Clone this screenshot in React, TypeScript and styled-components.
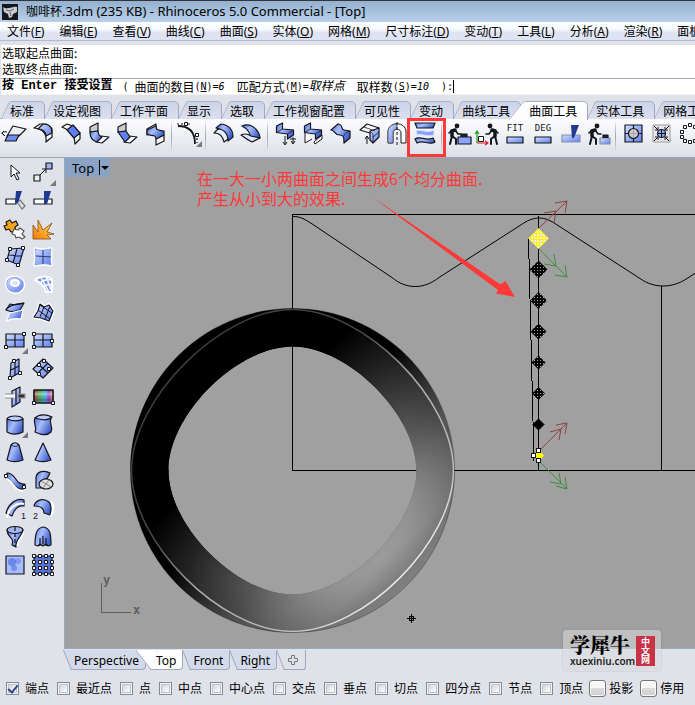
import React from "react";
import styled, { createGlobalStyle, css } from "styled-components";

const ui = `"Noto Sans", "Noto Sans CJK SC", sans-serif`;
const cjk = `"Noto Sans CJK SC", sans-serif`;
const RED = "#ff3838";

const Global = createGlobalStyle`
  * { box-sizing: border-box; }
  html, body, #root { height: 100%; }
  body { margin: 0; background: #e0e2ea; overflow: hidden; }
  button, input { font: inherit; color: inherit; margin: 0; padding: 0; border: 0; background: none; }
  svg { display: block; }
`;

const Window = styled.div`
  position: relative;
  display: flex;
  flex-direction: column;
  height: 100vh;
  background: #e0e2ea;
  color: #000;
  font: 12px/16px ${cjk};
  white-space: nowrap;
  overflow: hidden;
`;

const TitleBar = styled.header`
  display: flex;
  align-items: center;
  gap: 8px;
  flex: none;
  height: 22px;
  padding-left: 2px;
  border-top: 1px solid #33343c;
  background: linear-gradient(#94b1d0, #b9d0e9);
  font: 13px/20px ${ui};
`;
const Title = styled.h1`
  margin: 0;
  font: inherit;
`;
const FileName = styled.span`
  font-size: 12px;
`;

const MenuBar = styled.nav`
  display: flex;
  gap: 15px;
  flex: none;
  height: 19px;
  padding-left: 7px;
  overflow: hidden;
  border-bottom: 1px solid #b3bbd3;
  background: linear-gradient(#fbfcff 0 35%, #dfe4f3 60%, #dde3f2);
  font: 12px/19px ${ui};
`;
const MenuItem = styled.button`
  flex: none;
`;

const CommandArea = styled.section`
  flex: none;
  margin: 4px 0 6px 1px;
  background: #fff;
  border-bottom: 1px solid #f4f5f9;
`;
const History = styled.div`
  height: 34px;
  padding-left: 1px;
  border-bottom: 1px solid #a4a9bb;
`;
const Prompt = styled.div`
  display: flex;
  align-items: center;
  height: 15px;
  padding-left: 1px;
  line-height: 15px;
`;
const Mono = styled.span`
  font: 10px/15px "DejaVu Sans Mono", monospace;
`;
const Strong = styled.strong`
  margin-right: 10px;
  font: bold 12px/15px "Liberation Mono", ${cjk};
`;
const Option = styled.button`
  display: flex;
  align-items: center;
  margin-right: 12px;
  i { font-family: "DejaVu Sans Mono", ${cjk}; }
`;
const CommandInput = styled.input`
  flex: 1;
  min-width: 0;
  height: 13px;
  border-left: 1px solid #000;
  outline: none;
`;

const TabStrip = styled.div`
  display: flex;
  flex: none;
  height: 18px;
  padding-left: 1px;
  border-bottom: 1px solid #a9b0c6;
`;
const ToolTab = styled.button<{ $active?: boolean }>`
  position: relative;
  z-index: ${(p) => (p.$active ? 2 : 0)};
  flex: none;
  height: 18px;
  padding: 0 10px 0 9px;
  line-height: 17px;
  isolation: isolate;
  &::before, &::after {
    content: "";
    position: absolute;
    z-index: -1;
    top: 0;
    bottom: ${(p) => (p.$active ? "-1px" : "0")};
    background: ${(p) => (p.$active ? "#fdfdff" : "linear-gradient(#ccd4e8, #dbe0ee)")};
    border-top: 1px solid #a9b0c6;
  }
  &::before {
    left: ${(p) => (p.$active ? "-4px" : "4px")};
    width: 30px;
    border-left: 1px solid #a0a8c0;
    border-top-left-radius: 3px;
    transform: skewX(${(p) => (p.$active ? "-38deg" : "-25deg")});
  }
  &::after {
    left: 14px;
    right: -1px;
    border-right: 1px solid #a0a8c0;
    border-top-right-radius: 5px;
  }
`;
const ToolBar = styled.div`
  display: flex;
  flex: none;
  align-items: center;
  height: 39px;
  padding: 0 0 8px 1px;
  border-bottom: 1px solid #9aa8bd;
  background: linear-gradient(#fdfdff, #dcdfe7);
`;
const ToolButton = styled.button<{ $marked?: boolean }>`
  position: relative;
  display: grid;
  place-items: center;
  flex: none;
  width: 28px;
  height: 28px;
  ${(p) =>
    p.$marked &&
    css`
      &::after {
        content: "";
        position: absolute;
        z-index: 3;
        inset: -2px -7px -9px -4px;
        border: 3px solid ${RED};
      }
    `}
`;
const Divider = styled.span`
  flex: none;
  width: 1px;
  height: 28px;
  margin: 4px 3px 0 2px;
  background: linear-gradient(#e4e6ec, #a4a6ae 50%, #d4d6de);
`;

const Work = styled.main`
  display: flex;
  flex: 1;
  min-height: 0;
`;
const SideBar = styled.aside`
  display: grid;
  grid-template-columns: 28px 28px;
  grid-auto-rows: 28px;
  flex: none;
  align-content: start;
  width: 64px;
  padding: 1px 0 0 1px;
`;
const ViewColumn = styled.div`
  display: flex;
  flex: 1;
  flex-direction: column;
  min-width: 0;
`;
const Viewport = styled.section`
  position: relative;
  flex: 1;
  min-height: 0;
  overflow: hidden;
  border: solid #9aa8bd;
  border-width: 0 0 1px 1px;
  background: #a0a0a0;
`;
const Scene = styled.svg`
  position: absolute;
  inset: 0;
  width: 100%;
  height: 100%;
`;
const ViewName = styled.button`
  position: absolute;
  top: 0;
  left: 0;
  display: flex;
  align-items: center;
  gap: 5px;
  height: 19px;
  padding: 0 1px 0 7px;
  background: #8aa3c4;
  font: 13px/18px ${ui};
`;
const Drop = styled.span`
  display: grid;
  place-items: center;
  width: 10px;
  height: 15px;
  border-left: 1px solid #000;
`;
const Note = styled.p`
  position: absolute;
  top: 10px;
  left: 132px;
  margin: 0;
  color: ${RED};
  font: 16px/20px ${cjk};
`;

const ViewTabs = styled.div`
  display: flex;
  flex: none;
  height: 22px;
  padding-top: 1px;
`;
const ViewTab = styled.button<{ $active?: boolean }>`
  position: relative;
  z-index: ${(p) => (p.$active ? 2 : 0)};
  display: grid;
  place-items: center;
  flex: none;
  height: 20px;
  padding: 0 7px 0 10px;
  font: 12px/19px ${ui};
  isolation: isolate;
  &::before, &::after {
    content: "";
    position: absolute;
    z-index: -1;
    top: 0;
    bottom: 0;
    background: ${(p) => (p.$active ? "#fff" : "#d3daea")};
    border-bottom: 1px solid #a0a8c0;
  }
  &::before {
    left: ${(p) => (p.$active ? "-3px" : "3px")};
    width: 20px;
    border-left: 1px solid #a0a8c0;
    transform: skewX(${(p) => (p.$active ? "38deg" : "22deg")});
  }
  &::after {
    left: 12px;
    right: 0;
    border-right: 1px solid #a0a8c0;
    border-bottom-right-radius: 4px;
  }
`;
const AddTab = styled(ViewTab)`
  padding: 0 8px 0 11px;
  &::before, &::after { background: #e0e2ea; }
`;

const SnapBar = styled.footer`
  display: flex;
  flex: none;
  gap: 8px;
  align-items: center;
  height: 34px;
  padding-left: 6px;
`;
const Snap = styled.label`
  display: flex;
  flex: none;
  align-items: center;
  gap: 6px;
`;
const Check = styled.input`
  appearance: none;
  flex: none;
  width: 13px;
  height: 13px;
  border: 1px solid #858b94;
  background: linear-gradient(135deg, #c6cad0, #f6f7f8 70%);
  box-shadow: inset 0 0 0 1px #f3f4f6, inset 0 0 0 2px #c0c4ca;
  display: grid;
  place-items: center;
  &:checked::after {
    content: "";
    width: 4px;
    height: 8px;
    margin-bottom: 3px;
    border: solid #33468c;
    border-width: 0 2px 2px 0;
    transform: rotate(40deg);
  }
`;
const PushSnap = styled(Snap)`
  gap: 3px;
  margin-left: -2px;
  & + & { margin-left: -1px; }
`;
const Push = styled.input`
  appearance: none;
  width: 17px;
  height: 17px;
  border: 1px solid #777;
  border-radius: 3px;
  background: linear-gradient(#f7f7f7 45%, #dadada 50%, #d0d0d0);
  box-shadow: inset 0 0 0 1px #fafafa;
`;

const Watermark = styled.aside`
  position: absolute;
  right: 34px;
  bottom: 34px;
  z-index: 4;
  display: flex;
  align-items: center;
  gap: 3px;
  padding: 4px 6px 4px 7px;
  border-radius: 4px;
  background: rgba(218, 219, 221, 0.55);
  box-shadow: 0 0 2px rgba(120, 120, 120, 0.4);
`;
const Brand = styled.div`
  width: 63px;
  font: 600 10px/11px "Noto Sans", sans-serif;
  color: #222;
`;
const BrandName = styled.div`
  color: #000;
  font: 900 20px/22px "Noto Serif CJK SC", "Noto Sans CJK SC", serif;
`;
const Seal = styled.div`
  display: grid;
  place-items: center;
  width: 19px;
  height: 30px;
  background: #c83345;
  color: #fff;
  font: bold 9px/9px ${cjk};
  white-space: pre-line;
`;

const K = "#15161c";
const B = "url(#blue)";
const D = "url(#deep)";

const Glyph = ({ children, more }: { children: React.ReactNode; more?: boolean }) => (
  <svg width="28" height="28" viewBox="-2 -2 28 28" fill="none" stroke={K} strokeWidth="1.2" strokeLinejoin="round" aria-hidden>
    {children}
    {more && <path d="M25 19v6h-6z" fill="#777" stroke="none" />}
  </svg>
);

const Sq = ({ at, s = 3 }: { at: number[][]; s?: number }) => (
  <>
    {at.map(([x, y]) => (
      <rect key={`${x}-${y}`} x={x - s / 2} y={y - s / 2} width={s} height={s} fill="#fff" stroke={K} strokeWidth="1" />
    ))}
  </>
);

const Man = () => (
  <g stroke={K} strokeLinecap="round">
    <circle cx="10" cy="4" r="2.4" fill={K} stroke="none" />
    <path d="M8 8L5 9v5" strokeWidth="3.500" />
    <path d="M5 14l-2 8M5 14l4 3v5" strokeWidth="2" />
    <path d="M8 8l3 4h3M5 8L2 11" strokeWidth="1.6" />
  </g>
);
const Chair = () => (
  <>
    <path d="M3.500 4l6-3v6l11 1v5l-6 4v-5l-11-1.500z" fill={D} />
    <path d="M9.500 7l-6 3.500M14.500 12l6-4" strokeWidth=".8" />
  </>
);

type Tool = { name: string; art: React.ReactNode; more?: boolean; marked?: boolean } | null;

const tools: Tool[] = [
  { name: "延伸曲面", art: <><path d="M10 4l13 3-7 7H4z" fill="#eee" /><path d="M5 13h11l-3 6H2z" fill="#6f8df0" /><path d="M4 10c-6-1-6 2-3 3M1 9l-2 2 3 3" strokeWidth="1" /></> },
  { name: "曲面圆角", art: <><path d="M3 6l6-4h6c5 2 7 5 6 9v4l-6 5c1-8-3-13-12-14z" fill="#fbfbfb" /><path d="M7 7l5-5c6 0 9 4 9 9l-6 3c0-4-3-7-8-7z" fill={B} /></> },
  { name: "曲面斜角", art: <><path d="M3 5l5-3 6 2-5 4zM15 15l6-4v6l-5 5z" fill="#f4f4f4" /><path d="M8 8l6-5 7 8-6 5z" fill="#5f7ff0" /></> },
  { name: "不等距圆角", art: <><path d="M3 10V5l8-4v8z" fill="#ccc" /><path d="M14 14l8 1-7 6-6-1z" fill="#fff" /><path d="M3 10l8-1c0 3 1 5 4 6l-5 5c-4-1-7-4-7-10z" fill={D} /></> },
  { name: "不等距斜角", art: <><path d="M3 10V5l8-4v8z" fill="#ccc" /><path d="M14 14l8 1-7 6-6-1z" fill="#fff" /><path d="M3 10l8-1 4 6-5 5z" fill="#5f7ff0" /></> },
  { name: "混接曲面", art: <><path d="M4 7l9-5v5l-9 6zM13 17l8-4v6l-8 4z" fill="#fff" /><path d="M4 8l9-4c0 5 3 4 8 5v4l-8 4c0-6-6-2-9-5z" fill={D} /></> },
  null,
  { name: "曲线工具", more: true, art: <><path d="M1 4c11 0 17 6 17 18" strokeWidth="1.8" /><path d="M0 2h7m4 0h4M20 16v5" strokeDasharray="2 2" /><Sq at={[[9, 2], [20, 13]]} /></> },
  null,
  { name: "偏移曲面", art: <><path d="M5 6l5-4c7 1 12 5 12 13l-5 4C17 12 12 7 5 6z" fill={D} /><path d="M3 11l4-4c6 0 9 4 10 10l-4 3c-1-5-4-9-10-9z" fill="#e8edff" /></> },
  { name: "偏移不等距", art: <><path d="M3 4c8-4 17 3 18 12l-9 2C12 11 9 7 3 4z" fill={D} /><path d="M2 13c4-2 7-1 10 1l9 2-8 4c-4-2-7-4-11-7z" fill="#dfe7ff" /></> },
  null,
  { name: "连接曲面", art: <><Chair /><path d="M12 14v8m-2-2l2 3 2-3M20 15v6m-2-2l2 3 2-3M17 17h6" strokeWidth="1" /></> },
  { name: "对称曲面", art: <><path d="M4 10v11l7-4M13 20l8-7v4l-7 5z" fill="#fff" strokeWidth="1" /><Chair /></> },
  { name: "衔接曲面", art: <><path d="M2 8l7-6c5 0 3 6 6 6l6 1v7l-6 5c0-5 0-8-4-8-6 0-4-4-9-5z" fill={D} /><path d="M15 14c0-3 3-4 6-5" strokeWidth=".8" /></> },
  { name: "合并曲面", art: <><path d="M3 8l7-6 12 4-6 6z" fill="#fff" /><path d="M13 9l9-3v9l-6 6-3-3z" fill={B} /><path d="M13 9l3 3v9M7 5l11 4M16 15l6-5" strokeWidth=".8" /><path d="M10 22v-8m-2 3l2-3 2 3" strokeWidth="1" /></> },
  { name: "重建曲面", art: <><path d="M3 21V10c0-11 18-11 18 0v11h-5V11c0-5-8-5-8 0v10z" fill="#fff" strokeWidth="1" /><path d="M3 21V10C3 5 7 2 12 2v5c-3 0-4 2-4 4v10z" fill={B} stroke="#555" strokeWidth=".8" /><path d="M12 0v24" strokeDasharray="3 2" strokeWidth="1" /></> },
  { name: "均分曲面", marked: true, art: <><path d="M2 1h20l-2 5H4z" fill={D} /><path d="M3 9c5-3 10 3 18-1v5c-6 3-12-2-17 0z" fill="#86a2ff" stroke="#dce5ff" /><path d="M2 17c5-4 11 3 18-1l2 4c-6 4-12-3-18 1z" fill={D} /></> },
  null,
  { name: "调整曲面", art: <><Man /><rect x="11" y="15" width="13" height="7" fill="#8aa5ff" /><path d="M14 15v-3h6v3" fill="#222" /></> },
  { name: "移动曲面", art: <><g transform="translate(25 0) scale(-1 1)"><Man /></g><path d="M2 21V9m-2 3l2-3 2 3" stroke="#1a9a22" /><path d="M2 21h11m-3-2l3 2-3 2" stroke="#e31919" /><Sq at={[[6, 17]]} s={5} /></> },
  { name: "FIT", art: <><text x="12" y="9" textAnchor="middle" fontFamily="DejaVu Sans Mono, monospace" fontSize="9" fill={K} stroke="none">FIT</text><rect x="4" y="15" width="16" height="6" fill={B} /></> },
  { name: "DEG", art: <><text x="12" y="9" textAnchor="middle" fontFamily="DejaVu Sans Mono, monospace" fontSize="9" fill={K} stroke="none">DEG</text><rect x="4" y="15" width="16" height="6" fill={B} /></> },
  { name: "分割曲面", art: <><path d="M3 13h18v7H3z" fill={B} stroke="#8a8fa5" /><path d="M12 3h8l-5 13h-2z" fill="#233b8c" stroke="none" /></> },
  { name: "取消修剪", art: <><Man /><rect x="13" y="16" width="10" height="6" fill={B} stroke="#8a8fa5" /><path d="M16 16v-3h5v3" fill="#222" /></> },
  null,
  { name: "缩回曲面", art: <><rect x="4" y="3" width="17" height="17" fill={B} /><path d="M12.500 3v17M4 11.500h17" /><circle cx="12.500" cy="11.500" r="5" fill="#ccc" /><path d="M12.500 7v9M8 11.500h9" stroke="#999" strokeWidth=".8" /></> },
  { name: "收缩曲面", art: <><rect x="4" y="3" width="17" height="17" stroke="#999" fill="#e8e8ec" strokeWidth="1" /><path d="M5 4l4 4m0-3v3H6M20 4l-4 4m0-3v3h3M5 19l4-4m0 3v-3H6M20 19l-4-4m0 3v-3h3" strokeWidth="1" /><circle cx="12.500" cy="11.500" r="4" fill="#8ea7ff" /><path d="M12.500 8v7M9 11.500h7" strokeWidth="1" /></> },
  { name: "控制点", art: <Sq at={[[13, 3], [18, 5], [8, 5], [5, 10], [5, 15], [8, 19], [13, 20], [18, 19], [21, 11]]} /> },
];

const Net = () => <path d="M3 5h18v13H3z M12 5v13M3 11h18" fill={B} />;
const Halo = ({ d, children }: { d: string; children?: React.ReactNode }) => (
  <><path d={d} stroke="#fff" strokeWidth="3.500" /><path d={d} fill={B} stroke="#6f86cf" strokeWidth="0.600" />{children}</>
);

const sideTools: NonNullable<Tool>[] = [
  { name: "选取", art: <path d="M8 4v12l3-3 3 6 2-1-3-6h4z" fill="#fff" strokeWidth="1" /> },
  { name: "点", more: true, art: <><path d="M8 15l7-7m-4 0h4v4" strokeWidth="1" /><rect x="3" y="14" width="6" height="6" fill="#eee" /><rect x="15" y="2" width="6" height="6" fill="#9eb2f7" /></> },
  { name: "修剪", art: <><path d="M3 10h10v5H3z" fill="#fff" /><path d="M14 13l3-2 5 6-3 3z" fill="#ddd" stroke="#777" /><path d="M13 2h6l-4 12h-3z" fill="#203990" stroke="none" /></> },
  { name: "分割", art: <><path d="M3 10h18v5H3z" fill="#fff" /><path d="M13 2h7l-4 13h-3z" fill="#203990" stroke="none" /></> },
  { name: "组合", art: <><path d="M3 5l4-2 2 3 4-2 2 4-3 2 1 4-5 1-2-3-3 1-2-4 3-1z" fill="#f6a51c" /><path d="M11 12l4 1 2-2 4 3-2 3 3 3-3 2-3-2-3 1-1-3-3-1z" fill="#fff" stroke="#555" /></> },
  { name: "炸开", art: <path d="M2 22V8l5 7 0-12 5 10 9-7-5 9 7 2-7 1 4 4z" fill="url(#fire)" stroke="#8a4a10" strokeWidth=".8" /> },
  { name: "三点曲面", art: <><path d="M7 4l14-1-5 17-12-5z M14 4l-4 14M6 10l13 1" fill={B} /><Sq at={[[7, 4], [20, 3], [4, 15], [15, 20]]} /></> },
  { name: "边缘曲面", art: <Halo d="M4 4c6 2 10 1 16 0-1 6-1 10 0 16-6-2-10-1-16 0 1-6 1-10 0-16z"><path d="M12 5v14M5 11l15 1" strokeWidth="1" stroke="#28357a" /></Halo> },
  { name: "平面曲线", art: <Halo d="M4 8c3-5 13-5 16 1 2 7-4 11-9 10C5 18 3 14 4 8z"><ellipse cx="12" cy="10" rx="4" ry="3" fill="#dfe3f7" stroke="#fff" strokeWidth="2" /></Halo> },
  { name: "网线", art: <><path d="M4 7c6-5 13-4 17-1v13h-6C14 13 10 10 4 7z" fill="#7c97ee" stroke="#fff" strokeWidth="2" /><path d="M9 10c3-3 7-4 12-3M12 14c2-2 5-3 9-2M9 3l9 16M15 3l5 14" stroke="#fff" strokeWidth="1.500" /></> },
  { name: "放样", art: <><path d="M3 9l4-6c4 1 9 1 14-1l-4 7c-4 2-9 2-14 0z" fill={D} /><path d="M3 20l4-8c4-1 8-2 13-3l-2 9c-5-1-10 0-15 2z" fill={D} stroke="#fff" /><path d="M3 9c1-3 8-6 18-7" /></> },
  { name: "嵌面", art: <><path d="M9 3l4 3 5-2 4 6-4 10-8-3-7-1 4-6z" stroke="#fff" strokeWidth="4" /><path d="M9 3l4 3 5-2 4 6-4 10-8-3-7-1 4-6z" fill={B} /><path d="M7 9l12 9M9 4l12 8M13 6L9 16M19 5l-5 13" strokeWidth="1" /></> },
  { name: "平面", more: true, art: <><Net /><Sq at={[[3, 18], [21, 5]]} /></> },
  { name: "平面三点", art: <><Net /><Sq at={[[3, 5], [3, 18], [21, 12]]} /></> },
  { name: "垂直平面", art: <><path d="M8 6l8-4v14l-9 5z M12 4v15M8 13l8-4" fill={B} /><Sq at={[[11, 4], [7, 21], [17, 16]]} /></> },
  { name: "逼近平面", art: <><path d="M12 2l10 9-10 10-10-9z M7 7l10 9M17 6L7 16" fill={B} /><Sq at={[[8, 8], [13, 4], [18, 12], [8, 17]]} /></> },
  { name: "切割平面", art: <><path d="M9 6l8-4v15l-8 5z M13 4v16" fill={B} /><path d="M2 11h10" stroke="#fff" strokeWidth="4" /><path d="M2 9h9M2 13h9" stroke="#888" strokeWidth="1" /><path d="M15 9h7v4h-7z" stroke="#999" fill="#333" /></> },
  { name: "帧平面", art: <><rect x="3" y="5" width="19" height="13" fill="url(#rainbow)" /><path d="M3 9h19" stroke="#fff" strokeOpacity=".35" strokeWidth="3" /><path d="M3 15h19" stroke="#402080" strokeOpacity=".35" strokeWidth="3" /><rect x="3" y="5" width="19" height="13" /><Sq at={[[3, 18], [22, 18]]} /></> },
  { name: "挤出", more: true, art: <><path d="M4 6v13c5 3 10 3 16 0V6z" fill={D} /><path d="M4 6c2-4 14-4 16 0-5 3-11 2-16 0z" fill="#bdccff" /></> },
  { name: "挤出沿曲线", art: <><path d="M4 5c-3 6 3 8 0 14 6 3 12 4 16 0 3-6-3-8 0-14z" fill={D} /><path d="M4 5c4-4 11-4 17-1-4 4-11 3-17 1z" fill="#bdccff" /></> },
  { name: "挤出锥形", art: <><path d="M8 4c3-3 5-3 8 0l4 15c-5 2-11 2-16 0z" fill={D} /><path d="M8 4c3 2 5 2 8 0" strokeWidth=".8" /></> },
  { name: "挤出至点", art: <path d="M12 2l8 17c-5 2-11 2-16 0z" fill={D} /> },
  { name: "单轨扫掠", art: <><path d="M4 4c10 0 7 12 18 11l-2 5C10 21 11 10 3 9z" fill={D} /><path d="M3 10c7 0 7 12 17 12" stroke="#fff" strokeWidth="2" /><Sq at={[[3, 7], [21, 18]]} /></> },
  { name: "旋转", art: <><path d="M5 19V8c1-6 9-7 14-4l-3 6c-4-1-6 1-6 9z" fill={D} /><ellipse cx="15" cy="15" rx="7" ry="5" fill="#ddd" /><path d="M10 12l10 6M12 19l6-8" stroke="#888" strokeWidth="1" /></> },
  { name: "单轨", art: <><path d="M3 16C6 5 15 1 21 3v6c-7-1-10 4-12 10z" fill={D} /><path d="M4 21C5 11 14 5 21 7" stroke="#fff" strokeWidth="2" /><text x="18" y="22" fontFamily="Liberation Sans" fontSize="9" fill={K} stroke="none">1</text></> },
  { name: "双轨", art: <><path d="M3 9c2-7 10-8 15-4 3 3 2 9 1 13l-6-2c0-5-4-7-10-7z" fill={D} /><path d="M20 4c4 5 2 11 0 15" stroke="#fff" strokeWidth="2" /><text x="2" y="22" fontFamily="Liberation Sans" fontSize="9" fill={K} stroke="none">2</text></> },
  { name: "旋转成形", art: <><path d="M20 6c0 6-6 8-6 15" stroke="#fff" strokeWidth="3" /><path d="M4 5c0 8 8 7 5 15l4 2c-1-8 6-10 7-17z" fill={D} /><ellipse cx="12" cy="5" rx="8" ry="3.500" fill="#a5b6f0" /><path d="M12 2v20" strokeDasharray="4 2" /></> },
  { name: "布帘", art: <path d="M4 20C4 8 6 3 12 2c7 1 8 6 8 18l-3 1-2-2-3 2-3-2-2 2z M9 13v8M12 11v8M15 13v8" fill={D} /> },
  { name: "高度场", art: <><rect x="3" y="3" width="18" height="18" fill="#a9bcff" /><circle cx="9" cy="9" r="4" fill="#4565d8" fillOpacity=".6" stroke="none" /><circle cx="15" cy="8" r="3" fill="#4565d8" fillOpacity=".4" stroke="none" /><circle cx="11" cy="15" r="3" fill="#4565d8" fillOpacity=".5" stroke="none" /></> },
  { name: "点阵", art: <><rect x="3" y="3" width="18" height="18" fill="#5873d5" /><Sq at={[3, 9, 15, 21].flatMap((x) => [3, 9, 15, 21].map((y) => [x, y]))} /></> },
];

const Defs = () => (
  <defs>
    <linearGradient id="blue" x1="0" y1="0" x2="1" y2="1"><stop stopColor="#d3dfff" /><stop offset="1" stopColor="#5f80ee" /></linearGradient>
    <linearGradient id="deep" x1="0" y1="0" x2="1" y2=".5"><stop stopColor="#4f6fd8" /><stop offset=".45" stopColor="#a9beff" /><stop offset="1" stopColor="#3f5fc8" /></linearGradient>
    <linearGradient id="fire" x1="1" y1="0" x2="0" y2="1"><stop stopColor="#ffe16a" /><stop offset="1" stopColor="#f47b00" /></linearGradient>
    <linearGradient id="rainbow"><stop stopColor="#e03040" /><stop offset=".3" stopColor="#40b850" /><stop offset=".6" stopColor="#50b0e0" /><stop offset=".8" stopColor="#a040c0" /><stop offset="1" stopColor="#e8c050" /></linearGradient>
    <linearGradient id="shade" gradientUnits="userSpaceOnUse" x1="212" y1="390" x2="422" y2="600">
      <stop offset=".18" stopColor="#000" /><stop offset=".38" stopColor="#2c2c2c" /><stop offset=".58" stopColor="#5a5a5a" /><stop offset=".72" stopColor="#888" /><stop offset=".82" stopColor="#a0a0a0" />
    </linearGradient>
    <linearGradient id="outer" gradientUnits="userSpaceOnUse" x1="178" y1="356" x2="407" y2="585">
      <stop offset=".45" stopColor="#000" /><stop offset=".7" stopColor="#505050" /><stop offset="1" stopColor="#808080" />
    </linearGradient>
    <linearGradient id="rim" gradientUnits="userSpaceOnUse" x1="178" y1="356" x2="407" y2="585">
      <stop offset="0" stopColor="#3c3c3c" /><stop offset=".35" stopColor="#484848" /><stop offset=".55" stopColor="#a8a8a8" /><stop offset=".85" stopColor="#c0c0c0" /><stop offset="1" stopColor="#f2f2f2" />
    </linearGradient>
    <radialGradient id="edge" gradientUnits="userSpaceOnUse" cx="292.500" cy="470.500" r="162">
      <stop offset=".76" stopColor="#000" stopOpacity="0" /><stop offset="1" stopColor="#000" stopOpacity=".3" />
    </radialGradient>
    <pattern id="mesh" width="3" height="3" patternUnits="userSpaceOnUse"><rect width="3" height="3" fill="#000" /><rect width="1" height="1" fill="#a0a0a0" /></pattern>
    <pattern id="sun" width="3" height="3" patternUnits="userSpaceOnUse"><rect width="3" height="3" fill="#fff200" /><rect width="2" height="2" fill="#f0f0e8" /></pattern>
  </defs>
);

const roundedLoop = (r: number, k: number) => {
  const cx = 292.5, cy = 470.5, c = r * k;
  return `M${cx} ${cy - r}C${cx + c} ${cy - r} ${cx + r} ${cy - c} ${cx + r} ${cy}S${cx + c} ${cy + r} ${cx} ${cy + r}S${cx - r} ${cy + c} ${cx - r} ${cy}S${cx - c} ${cy - r} ${cx} ${cy - r}z`;
};
const hole = roundedLoop(124, 0.45);
const lip = roundedLoop(161, 0.445);
const disc = roundedLoop(162, 0.5523);
const diamond = (y: number, r: number) => `M538.500 ${y - r}l${r} ${r}l${-r} ${r}l${-r} ${-r}z`;

const Model = () => (
  <Scene aria-label="Top 视图">
    <Defs />
    <g transform="translate(-65 -158)" fill="none" stroke="#000">
      <path d="M695 214.500H292.500V470.500H3000M695 214.500H3000M661.500 286V470M538.500 216V470" shapeRendering="crispEdges" />
      <path d="M293 216.500c8 0 12 3 20 8l79 53c14 12 32 12 47 0l81-52c14-10 24-10 38 0l82 53c14 10 32 10 47 0l80-52" />
      <path d="M528.500 238L534 461" shapeRendering="crispEdges" />
      <g stroke="none" fillRule="evenodd">
        <path d={disc + hole} fill="url(#outer)" />
        <path d={lip + hole} fill="url(#shade)" />
        <path d={lip + hole} fill="url(#edge)" />
      </g>
      <path d={lip} stroke="url(#rim)" strokeWidth="1.500" />
      <path d={disc} stroke="#000" strokeOpacity=".3" />
      {[[269, 9], [300, 8.5], [331, 8], [362, 7], [393, 6.5], [424, 5.5]].map(([y, r]) => (
        <path key={y} d={diamond(y + 0.5, r)} fill={r < 6 ? "#000" : "url(#mesh)"} stroke={r < 6 ? "#000" : "none"} />
      ))}
      <path d={diamond(238.5, 10)} fill="url(#sun)" stroke="#f6ec30" />
      <g stroke="#8f4242">
        <path d="M539 228l28-27M544 213l12-2-2 12M555 203l12-2-2 12" />
        <path d="M541 449l26-26M550 432l11-3-2 11M556 425l11-2-2 11" />
      </g>
      <g stroke="#3c8f3c">
        <path d="M539 249l28 28M544 264l12 2-2-12M555 275l12 2-2-12" />
        <path d="M541 463l26 26M550 482l11 2-2-11M556 486l11 3-2-12" />
      </g>
      <path d="M536 452h5l3 4-3 3h-5z" fill="#ff0" stroke="none" />
      <Sq at={[[538.5, 450.5], [533.5, 455.5], [538.5, 460.5]]} s={4} />
      <path d="M371 196l129.500 88.500 5-3.500 9.500 16-19-3.500 2-3.500z" fill={RED} stroke="none" />
      <path d="M101.500 583v29.500H131" stroke="#606060" shapeRendering="crispEdges" />
      <g fill="#606060" stroke="none" fontFamily="DejaVu Sans Mono, monospace" fontWeight="bold" fontSize="12">
        <text x="103" y="584">y</text><text x="133" y="614">x</text>
      </g>
      <path d="M407 618.500h9M411.500 614v9M409.500 616.500h4v4h-4z" shapeRendering="crispEdges" />
    </g>
  </Scene>
);

const menus = [["文件", "F"], ["编辑", "E"], ["查看", "V"], ["曲线", "C"], ["曲面", "S"], ["实体", "O"], ["网格", "M"], ["尺寸标注", "D"], ["变动", "T"], ["工具", "L"], ["分析", "A"], ["渲染", "R"], ["面板", "P"]];
const toolTabs = ["标准", "设定视图", "工作平面", "显示", "选取", "工作视窗配置", "可见性", "变动", "曲线工具", "曲面工具", "实体工具", "网格工具"];
const options = [["曲面的数目", "N", "6"], ["匹配方式", "M", "取样点"], ["取样数", "S", "10"]];
const snaps = ["端点", "最近点", "点", "中点", "中心点", "交点", "垂点", "切点", "四分点", "节点", "顶点"];

export default function App() {
  return (
    <Window>
      <Global />
      <TitleBar>
        <svg width="16" height="16" viewBox="0 0 16 16" aria-hidden>
          <rect width="16" height="16" fill="#16171b" />
          <path d="M1 3c2 2 4 1 6 1 3 0 4-2 8-1v5l-4 2-1 3-3 1-1-4-4-2z" fill="#c9cdd2" />
          <path d="M4 6l4 1 4-2M8 8l1 4" stroke="#60656c" fill="none" />
        </svg>
        <Title><FileName>咖啡杯</FileName>.3dm (235 KB) - Rhinoceros 5.0 Commercial - [Top]</Title>
      </TitleBar>
      <MenuBar>
        {menus.map(([label, key]) => <MenuItem key={label}>{label}(<u>{key}</u>)</MenuItem>)}
      </MenuBar>
      <CommandArea>
        <History><div>选取起点曲面:</div><div>选取终点曲面:</div></History>
        <Prompt>
          <Strong>按 Enter 接受设置</Strong>
          <Mono>(&nbsp;</Mono>
          {options.map(([label, key, value]) => (
            <Option key={key}>{label}<Mono>(<u>{key}</u>)=<i>{/\d/.test(value) && value}</i></Mono>{!/\d/.test(value) && <i>{value}</i>}</Option>
          ))}
          <Mono>):</Mono>
          <CommandInput aria-label="指令" />
        </Prompt>
      </CommandArea>
      <TabStrip role="tablist">
        {toolTabs.map((t) => <ToolTab key={t} role="tab" $active={t === "曲面工具"}>{t}</ToolTab>)}
      </TabStrip>
      <ToolBar>
        {tools.map((t, i) => t ? (
          <ToolButton key={i} aria-label={t.name} $marked={t.marked}><Glyph more={t.more}>{t.art}</Glyph></ToolButton>
        ) : <Divider key={i} />)}
      </ToolBar>
      <Work>
        <SideBar>
          {sideTools.map((t) => <ToolButton key={t.name} aria-label={t.name}><Glyph more={t.more}>{t.art}</Glyph></ToolButton>)}
        </SideBar>
        <ViewColumn>
          <Viewport>
            <Model />
            <ViewName>Top<Drop><svg width="8" height="4" viewBox="0 0 8 4"><path d="M0 0h8L4 4z" /></svg></Drop></ViewName>
            <Note>在一大一小两曲面之间生成6个均分曲面.<br />产生从小到大的效果.</Note>
          </Viewport>
          <ViewTabs role="tablist">
            <ViewTab role="tab">Perspective</ViewTab>
            <ViewTab role="tab" $active>Top</ViewTab>
            <ViewTab role="tab">Front</ViewTab>
            <ViewTab role="tab">Right</ViewTab>
            <AddTab aria-label="新增"><svg width="10" height="10" viewBox="0 0 10 10"><path d="M3.500 .5h3v3h3v3h-3v3h-3v-3h-3v-3h3z" fill="none" stroke="#777" /></svg></AddTab>
          </ViewTabs>
        </ViewColumn>
      </Work>
      <SnapBar>
        {snaps.map((s, i) => <Snap key={s}><Check type="checkbox" defaultChecked={i === 0} />{s}</Snap>)}
        <PushSnap><Push type="checkbox" />投影</PushSnap>
        <PushSnap><Push type="checkbox" />停用</PushSnap>
      </SnapBar>
      <Watermark>
        <Brand><BrandName>学犀牛</BrandName>xuexiniu.com</Brand>
        <Seal>{"中\n文\n网"}</Seal>
      </Watermark>
    </Window>
  );
}
